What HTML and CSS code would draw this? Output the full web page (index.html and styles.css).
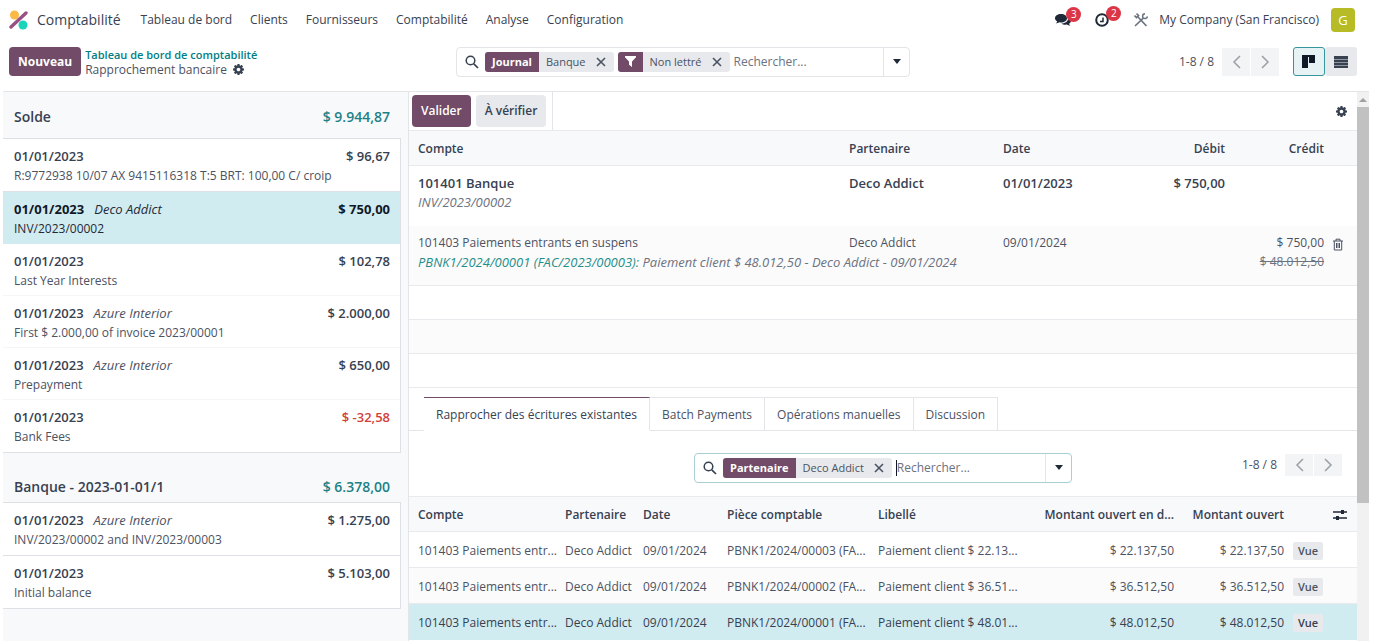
FILE: index.html
```
<!DOCTYPE html>
<html lang="fr">
<head>
    <meta charset="UTF-8">
    <meta name="viewport" content="width=device-width, initial-scale=1.0">
    <title>Rapprochement bancaire</title>
    <link rel="stylesheet" href="styles.css">
</head>
<body>
    <!-- Shared icons -->
    <svg class="sprite" aria-hidden="true">
        <symbol id="i-gear" viewBox="0 128 1536 1536"><path d="M1024 896q0-106-75-181t-181-75-181 75-75 181 75 181 181 75 181-75 75-181zm512-109v222q0 12-8 23t-20 13l-185 28q-19 54-39 91 35 50 107 138 10 12 10 25t-9 23q-27 37-99 108t-94 71q-12 0-26-9l-138-108q-44 23-91 38-16 136-29 186-7 28-36 28h-222q-14 0-24.500-8.500t-11.500-21.500l-28-184q-49-16-90-37l-141 107q-10 9-25 9-14 0-25-11-126-114-165-168-7-10-7-23 0-12 8-23 15-21 51-66.500t54-70.500q-27-50-41-99l-183-27q-13-2-21-12.500t-8-23.500v-222q0-12 8-23t19-13l186-28q14-46 39-92-40-57-107-138-10-12-10-24 0-10 9-23 26-36 98.500-107.500t94.500-71.500q13 0 26 10l138 107q44-23 91-38 16-136 29-186 7-28 36-28h222q14 0 24.500 8.500t11.500 21.500l28 184q49 16 90 37l142-107q9-9 24-9 13 0 25 10 129 119 165 170 7 8 7 22 0 12-8 23-15 21-51 66.500t-54 70.500q26 50 41 98l183 28q13 2 21 12.500t8 23.500z"/></symbol>
        <symbol id="i-search" viewBox="0 0 14 14"><circle cx="5.500" cy="5.500" r="4.300" fill="none" stroke="currentColor" stroke-width="1.500"/><path d="M8.800 8.800L13 13" stroke="currentColor" stroke-width="1.700"/></symbol>
        <symbol id="i-close" viewBox="0 0 10 10"><path d="M1 1l8 8M9 1L1 9" stroke="currentColor" stroke-width="1.600"/></symbol>
        <symbol id="i-caret" viewBox="0 0 8 5"><path d="M0 0h8L4 5z"/></symbol>
        <symbol id="i-prev" viewBox="0 0 9 14"><path d="M8 1L2 7l6 6" fill="none" stroke="currentColor" stroke-width="1.500"/></symbol>
        <symbol id="i-next" viewBox="0 0 9 14"><path d="M1 1l6 6-6 6" fill="none" stroke="currentColor" stroke-width="1.500"/></symbol>
    </svg>

    <header class="navbar">
        <svg class="logo" viewBox="0 0 20 20" aria-hidden="true">
            <circle cx="5.500" cy="5" r="4.500" fill="#fbb945"/>
            <circle cx="14" cy="15" r="4.500" fill="#1ad3bb"/>
            <path d="M2 17L17 3" stroke="#985184" stroke-width="3.400" stroke-linecap="round"/>
        </svg>
        <a class="app-name" href="#">Comptabilité</a>
        <nav class="menu">
            <a href="#">Tableau de bord</a>
            <a href="#">Clients</a>
            <a href="#">Fournisseurs</a>
            <a href="#">Comptabilité</a>
            <a href="#">Analyse</a>
            <a href="#">Configuration</a>
        </nav>
        <div class="systray">
            <button class="tray-button" aria-label="Messages">
                <svg width="16" height="14" viewBox="0 0 16 14"><path d="M6 1c3.400 0 6 1.800 6 4.300S9.400 9.500 6 9.500c-.6 0-1.200 0-1.700-.2C3.300 10 2 10.500.8 10.500c.7-.6 1.200-1.300 1.400-2C.8 7.700 0 6.600 0 5.300 0 2.800 2.600 1 6 1z"/><path d="M13.300 4.500c1.600.7 2.700 1.800 2.700 3.300 0 1.200-.8 2.300-2 3 .2.700.7 1.400 1.400 2-1.300 0-2.500-.5-3.500-1.200-2 .4-4.200 0-5.700-1.100 4 .1 7.300-2.200 7.100-6z"/></svg>
                <span class="badge">3</span>
            </button>
            <button class="tray-button" aria-label="Activités">
                <svg width="15" height="15" viewBox="0 0 15 15"><circle cx="7" cy="8" r="5.800" fill="none" stroke="currentColor" stroke-width="2"/><path d="M5 9.500h3V5.500" fill="none" stroke="currentColor" stroke-width="1.500"/></svg>
                <span class="badge">2</span>
            </button>
            <button class="tray-button tools" aria-label="Outils">
                <svg width="14" height="14" viewBox="0 0 14 14"><path d="M3.500 3.500L12.500 13" stroke="currentColor" stroke-width="1.700"/><path d="M.5 2.500L2.500 4.500 4.500 2.500 2.500.6M1 13L9 5.300" fill="none" stroke="currentColor" stroke-width="1.600"/><path d="M11 .8a2.400 2.400 0 1 0 2.400 2.600" fill="none" stroke="currentColor" stroke-width="1.500"/></svg>
            </button>
            <span class="company">My Company (San Francisco)</span>
            <span class="avatar">G</span>
        </div>
    </header>

    <div class="control-panel">
        <div class="control-left">
            <button class="btn btn-primary btn-new">Nouveau</button>
            <div class="breadcrumb">
                <a href="#">Tableau de bord de comptabilité</a>
                <div class="breadcrumb-current">
                    <span>Rapprochement bancaire</span>
                    <svg class="gear"><use href="#i-gear"/></svg>
                </div>
            </div>
        </div>
        <div class="search search-main">
            <svg class="search-icon"><use href="#i-search"/></svg>
            <div class="facet">
                <span class="facet-label">Journal</span>
                <span class="facet-value">Banque</span>
                <button class="facet-remove" aria-label="Retirer Banque"><svg><use href="#i-close"/></svg></button>
            </div>
            <div class="facet">
                <span class="facet-label facet-filter"><svg width="11" height="11" viewBox="0 0 11 11"><path d="M0 0h11v1.200L7 5.500V11L4 8.800V5.500L0 1.200z"/></svg></span>
                <span class="facet-value">Non lettré</span>
                <button class="facet-remove" aria-label="Retirer Non lettré"><svg><use href="#i-close"/></svg></button>
            </div>
            <input type="text" placeholder="Rechercher..." aria-label="Rechercher">
            <button class="search-toggle" aria-label="Options de recherche"><svg><use href="#i-caret"/></svg></button>
        </div>
        <div class="control-right">
            <div class="pager">
                <span>1-8 / 8</span>
                <div class="pager-buttons">
                    <button aria-label="Précédent"><svg><use href="#i-prev"/></svg></button>
                    <button aria-label="Suivant"><svg><use href="#i-next"/></svg></button>
                </div>
            </div>
            <div class="view-switch">
                <button class="active" aria-label="Kanban"><svg width="14" height="13" viewBox="0 0 14 13"><path d="M0 0h6v13H0zM7 1h6v7H7zM0 0h13v2H0z"/></svg></button>
                <button aria-label="Liste"><svg width="14" height="12" viewBox="0 0 14 12"><path d="M0 0h14v12H0z" opacity=".5"/><path d="M0 0h14v3H0zM0 4h14v2H0zM0 7h14v2H0zM0 10h14v2H0z"/></svg></button>
            </div>
        </div>
    </div>

    <main class="content">
        <aside class="statements">
            <div class="group-header group-first"><span>Solde</span><span class="total">$ 9.944,87</span></div>
            <div class="lines">
                <div class="line ruled">
                    <div class="line-top"><b>01/01/2023</b><b class="amount">$ 96,67</b></div>
                    <div>R:9772938 10/07 AX 9415116318 T:5 BRT: 100,00 C/ croip</div>
                </div>
                <div class="line selected">
                    <div class="line-top"><b>01/01/2023</b><i>Deco Addict</i><b class="amount">$ 750,00</b></div>
                    <div>INV/2023/00002</div>
                </div>
                <div class="line">
                    <div class="line-top"><b>01/01/2023</b><b class="amount">$ 102,78</b></div>
                    <div>Last Year Interests</div>
                </div>
                <div class="line">
                    <div class="line-top"><b>01/01/2023</b><i>Azure Interior</i><b class="amount">$ 2.000,00</b></div>
                    <div>First $ 2.000,00 of invoice 2023/00001</div>
                </div>
                <div class="line">
                    <div class="line-top"><b>01/01/2023</b><i>Azure Interior</i><b class="amount">$ 650,00</b></div>
                    <div>Prepayment</div>
                </div>
                <div class="line ruled">
                    <div class="line-top"><b>01/01/2023</b><b class="amount negative">$ -32,58</b></div>
                    <div>Bank Fees</div>
                </div>
            </div>
            <div class="group-header"><span>Banque - 2023-01-01/1</span><span class="total">$ 6.378,00</span></div>
            <div class="lines">
                <div class="line ruled">
                    <div class="line-top"><b>01/01/2023</b><i>Azure Interior</i><b class="amount">$ 1.275,00</b></div>
                    <div>INV/2023/00002 and INV/2023/00003</div>
                </div>
                <div class="line ruled">
                    <div class="line-top"><b>01/01/2023</b><b class="amount">$ 5.103,00</b></div>
                    <div>Initial balance</div>
                </div>
            </div>
        </aside>

        <section class="reconcile">
            <div class="toolbar">
                <div class="toolbar-buttons">
                    <button class="btn btn-primary">Valider</button>
                    <button class="btn btn-secondary">À vérifier</button>
                </div>
                <svg class="gear"><use href="#i-gear"/></svg>
            </div>

            <table class="entries">
                <colgroup><col><col class="w-partner"><col class="w-date"><col class="w-debit"><col class="w-credit"><col class="w-trash"></colgroup>
                <thead>
                    <tr><th>Compte</th><th>Partenaire</th><th>Date</th><th class="num">Débit</th><th class="num">Crédit</th><th></th></tr>
                </thead>
                <tbody>
                    <tr class="entry entry-main">
                        <td>101401 Banque<div class="note">INV/2023/00002</div></td>
                        <td>Deco Addict</td>
                        <td>01/01/2023</td>
                        <td class="num">$ 750,00</td>
                        <td></td>
                        <td></td>
                    </tr>
                    <tr class="entry">
                        <td>101403 Paiements entrants en suspens<div class="note"><a href="#">PBNK1/2024/00001 (FAC/2023/00003):</a> Paiement client $ 48.012,50 - Deco Addict - 09/01/2024</div></td>
                        <td>Deco Addict</td>
                        <td>09/01/2024</td>
                        <td></td>
                        <td class="num">$ 750,00<div class="old-amount">$ 48.012,50</div></td>
                        <td class="trash"><button aria-label="Supprimer"><svg width="12" height="13" viewBox="0 0 12 13"><path d="M1 3h10M4 3V1.200h4V3M2.300 3v9h7.400V3M4.500 5v5M6 5v5M7.500 5v5" fill="none" stroke="currentColor"/></svg></button></td>
                    </tr>
                    <tr class="empty"><td colspan="6"></td></tr>
                    <tr class="empty"><td colspan="6"></td></tr>
                    <tr class="empty"><td colspan="6"></td></tr>
                </tbody>
            </table>

            <nav class="tabs">
                <a class="active" href="#">Rapprocher des écritures existantes</a>
                <a href="#">Batch Payments</a>
                <a href="#">Opérations manuelles</a>
                <a href="#">Discussion</a>
            </nav>

            <div class="match-panel">
                <div class="search focused">
                    <svg class="search-icon"><use href="#i-search"/></svg>
                    <div class="facet">
                        <span class="facet-label">Partenaire</span>
                        <span class="facet-value">Deco Addict</span>
                        <button class="facet-remove" aria-label="Retirer Deco Addict"><svg><use href="#i-close"/></svg></button>
                    </div>
                    <input type="text" placeholder="Rechercher..." aria-label="Rechercher des écritures">
                    <button class="search-toggle" aria-label="Options de recherche"><svg><use href="#i-caret"/></svg></button>
                </div>
                <div class="pager">
                    <span>1-8 / 8</span>
                    <div class="pager-buttons">
                        <button aria-label="Précédent"><svg><use href="#i-prev"/></svg></button>
                        <button aria-label="Suivant"><svg><use href="#i-next"/></svg></button>
                    </div>
                </div>
            </div>

            <table class="matches">
                <colgroup><col><col class="w-name"><col class="w-day"><col class="w-move"><col class="w-label"><col class="w-currency"><col class="w-open"><col class="w-view"><col class="w-options"></colgroup>
                <thead>
                    <tr>
                        <th>Compte</th><th>Partenaire</th><th>Date</th><th>Pièce comptable</th><th>Libellé</th>
                        <th class="num">Montant ouvert en d...</th><th class="num">Montant ouvert</th><th></th>
                        <th><svg class="sliders" width="14" height="12" viewBox="0 0 14 12"><path d="M0 3h14M0 9h14" stroke="currentColor" stroke-width="1.400"/><path d="M8 1h3v4H8zM3 7h3v4H3z"/></svg></th>
                    </tr>
                </thead>
                <tbody>
                    <tr><td>101403 Paiements entr...</td><td>Deco Addict</td><td>09/01/2024</td><td>PBNK1/2024/00003 (FA...</td><td>Paiement client $ 22.13...</td><td class="num">$ 22.137,50</td><td class="num">$ 22.137,50</td><td class="view"><button>Vue</button></td><td></td></tr>
                    <tr><td>101403 Paiements entr...</td><td>Deco Addict</td><td>09/01/2024</td><td>PBNK1/2024/00002 (FA...</td><td>Paiement client $ 36.51...</td><td class="num">$ 36.512,50</td><td class="num">$ 36.512,50</td><td class="view"><button>Vue</button></td><td></td></tr>
                    <tr class="selected"><td>101403 Paiements entr...</td><td>Deco Addict</td><td>09/01/2024</td><td>PBNK1/2024/00001 (FA...</td><td>Paiement client $ 48.01...</td><td class="num">$ 48.012,50</td><td class="num">$ 48.012,50</td><td class="view"><button>Vue</button></td><td></td></tr>
                </tbody>
            </table>
        </section>

        <div class="scrollbar" aria-hidden="true">
            <svg width="8" height="4" viewBox="0 0 8 4"><path d="M4 0l4 4H0z"/></svg>
            <div class="thumb"></div>
        </div>
    </main>
</body>
</html>
```

FILE: styles.css
```
* {
    box-sizing: border-box;
}
body {
    margin: 0;
    padding: 0 4px 3px 3px;
    min-height: 100vh;
    display: flex;
    flex-direction: column;
    background: #fff;
    color: #4b5262;
    font-family: "Open Sans", "Noto Sans", sans-serif;
    font-size: 12px;
    line-height: 18px;
}
a {
    color: inherit;
    text-decoration: none;
}
button {
    font: inherit;
    color: inherit;
    border: none;
    background: none;
    padding: 0;
    cursor: pointer;
}
svg {
    display: block;
    fill: currentColor;
}
.sprite {
    position: absolute;
    width: 0;
    height: 0;
}
.gear {
    width: 11px;
    height: 11px;
    color: #374151;
}

/* Navbar */
.navbar {
    display: flex;
    align-items: center;
    height: 39px;
    padding: 0 14px 0 6px;
    color: #374151;
}
.logo {
    width: 20px;
    height: 20px;
    margin-right: 8px;
}
.app-name {
    font-size: 14px;
    margin-right: 20px;
}
.menu {
    display: flex;
    gap: 18px;
}
.systray {
    display: flex;
    align-items: center;
    margin-left: auto;
}
.tray-button {
    position: relative;
    margin-right: 24px;
    color: #1f2937;
}
.tray-button.tools {
    margin-right: 11px;
    color: #6b7280;
}
.badge {
    position: absolute;
    left: 11px;
    top: -6px;
    width: 15px;
    height: 15px;
    border-radius: 8px;
    background: #dc3545;
    color: #fff;
    font-size: 10px;
    line-height: 15px;
}
.avatar {
    width: 24px;
    height: 24px;
    margin-left: 12px;
    border-radius: 4px;
    background: #b7bb26;
    color: #fff;
    font-size: 13px;
    line-height: 24px;
    text-align: center;
}

/* Control panel */
.control-panel {
    display: flex;
    align-items: center;
    height: 53px;
    padding: 0 12px 7px 6px;
    border-bottom: 1px solid #e3e5e9;
}
.control-left,
.control-right {
    flex: 1;
    display: flex;
    align-items: center;
}
.control-right {
    justify-content: flex-end;
    gap: 14px;
}
.btn {
    height: 32px;
    padding: 0 9px;
    border-radius: 4px;
    font-weight: 600;
}
.btn-primary {
    background: #714b67;
    color: #fff;
}
.btn-secondary {
    background: #e7e9ed;
    color: #374151;
}
.btn-new {
    height: 29px;
    font-weight: 700;
}
.breadcrumb {
    margin-left: 4px;
    line-height: 15px;
}
.breadcrumb a {
    color: #017e84;
    font-size: 11px;
    font-weight: 600;
}
.breadcrumb-current {
    display: flex;
    align-items: center;
    gap: 6px;
}
.search {
    display: flex;
    align-items: center;
    width: 454px;
    height: 30px;
    padding-left: 8px;
    border: 1px solid #e3e5e9;
    border-radius: 4px;
}
.search-icon {
    width: 14px;
    height: 14px;
    margin-right: 6px;
    color: #374151;
}
.facet {
    display: flex;
    align-items: center;
    height: 20px;
    margin-right: 4px;
    border-radius: 3px;
    overflow: hidden;
    background: #e7e9ed;
    font-size: 11px;
    line-height: 20px;
}
.facet-label {
    padding: 0 7px;
    background: #714b67;
    color: #fff;
    font-weight: 700;
}
.facet-filter {
    display: flex;
    align-items: center;
    height: 20px;
}
.facet-value {
    padding: 0 10px 0 7px;
}
.facet-remove {
    padding-right: 8px;
}
.facet-remove svg {
    width: 10px;
    height: 10px;
    color: #4b5262;
}
.search input {
    flex: 1;
    min-width: 0;
    padding: 0;
    border: none;
    outline: none;
    background: none;
    font: inherit;
    color: inherit;
}
.search input::placeholder {
    color: #6b7280;
}
.search-toggle {
    display: flex;
    align-items: center;
    justify-content: center;
    width: 26px;
    height: 28px;
    border-left: 1px solid #e3e5e9;
    color: #1f2937;
}
.search-toggle svg {
    width: 8px;
    height: 5px;
}
.pager {
    display: flex;
    align-items: center;
    gap: 8px;
}
.pager-buttons {
    display: flex;
    gap: 1px;
}
.pager-buttons button {
    display: flex;
    align-items: center;
    justify-content: center;
    width: 28px;
    height: 28px;
    background: #f3f4f6;
    color: #9a9fa8;
}
.pager-buttons svg {
    width: 9px;
    height: 14px;
}
.view-switch {
    display: flex;
}
.view-switch button {
    display: flex;
    align-items: center;
    justify-content: center;
    width: 32px;
    height: 29px;
    border-radius: 3px;
    background: #e7e9ed;
    color: #374151;
}
.view-switch .active {
    border: 1px solid #35979c;
    background: #e6f2f3;
    color: #111827;
}

/* Content */
.content {
    flex: 1;
    display: flex;
}
.statements {
    flex: 0 0 406px;
    padding-right: 7px;
    border-right: 1px solid #e3e5e9;
    background: #f8f9fb;
}
.group-header {
    display: flex;
    align-items: flex-end;
    justify-content: space-between;
    height: 49px;
    padding: 0 11px 6px;
    font-size: 14px;
    font-weight: 600;
    color: #374151;
}
.group-first {
    height: 46px;
    padding-bottom: 12px;
}
.total {
    color: #1c8186;
}
.lines {
    border: 1px solid #dde0e4;
    border-width: 1px 1px 0 0;
    background: #fff;
}
.line {
    height: 52px;
    padding: 8px 10px 0 11px;
    line-height: 19px;
    border-bottom: 1px solid #f5f6f7;
}
.line.ruled {
    height: 53px;
    border-bottom-color: #dde0e4;
}
.line.selected {
    background: #d1ecf1;
    border-bottom-color: #d1ecf1;
    color: #1f2937;
}
.line-top {
    display: flex;
    gap: 10px;
}
.line b {
    font-size: 13px;
    font-weight: 600;
    color: #374151;
}
.line.selected b {
    color: #111827;
    font-weight: 700;
}
.line .amount {
    margin-left: auto;
}
.line .negative {
    color: #d23f3a;
}
.reconcile {
    flex: 1;
    min-width: 0;
}
.toolbar {
    display: flex;
    align-items: center;
    justify-content: space-between;
    height: 38px;
    padding-right: 10px;
}
.toolbar-buttons {
    display: flex;
    align-items: center;
    gap: 5px;
    height: 38px;
    padding: 0 6px 0 3px;
    border-right: 1px solid #e3e5e9;
}

/* Tables */
table {
    width: 100%;
    table-layout: fixed;
    border-collapse: separate;
    border-spacing: 0;
}
th {
    height: 36px;
    padding: 2px 5px 0;
    border: 1px solid #e8eaed;
    border-width: 1px 0;
    background: #f8f9fb;
    color: #374151;
    font-weight: 600;
    text-align: left;
    white-space: nowrap;
}
td {
    padding: 2px 5px 0;
    white-space: nowrap;
}
th:first-child,
td:first-child {
    padding-left: 9px;
}
.num {
    text-align: right;
}
.w-partner { width: 154px; }
.w-date { width: 140px; }
.w-debit { width: 92px; }
.w-credit { width: 99px; }
.w-trash { width: 28px; }
.entry td {
    height: 60px;
    padding-top: 8px;
    vertical-align: top;
}
.entries tbody tr:nth-child(even) td {
    background: #fbfbfc;
}
.entries tbody tr:nth-child(n+2) td {
    border-bottom: 1px solid #e8eaed;
}
.entry-main td {
    font-size: 13px;
    font-weight: 600;
    color: #374151;
}
.note,
.old-amount {
    font-size: 12px;
    font-weight: 400;
    color: #6b7280;
    line-height: 20px;
}
.note,
.line i {
    font-size: 13px;
    font-style: italic;
}
.note a {
    color: #1f8f8b;
}
.old-amount {
    text-decoration: line-through;
}
.trash svg {
    margin-top: 4px;
}
.trash button {
    display: block;
    margin-left: -2px;
}
.empty td {
    height: 34px;
}

/* Tabs */
.tabs {
    display: flex;
    margin-top: 9px;
    padding-left: 15px;
    box-shadow: inset 0 -1px #e3e5e9;
}
.tabs a {
    height: 34px;
    padding: 0 12px;
    border: 1px solid #e3e5e9;
    border-left: none;
    line-height: 34px;
}
.tabs .active {
    border-top-color: #714b67;
    border-bottom-color: #fff;
    background: #fff;
    color: #374151;
}

/* Matching entries */
.match-panel {
    display: flex;
    align-items: center;
    justify-content: space-between;
    height: 65px;
    padding: 8px 15px 0 285px;
}
.focused {
    width: 378px;
    border-color: #a9cfd4;
}
.focused input {
    height: 16px;
    border-left: 1px solid #111827;
}
.match-panel .pager {
    padding-bottom: 6px;
}
.match-panel .pager-buttons button {
    height: 22px;
}
.w-name { width: 78px; }
.w-day { width: 84px; }
.w-move { width: 151px; }
.w-label { width: 148px; }
.w-currency { width: 158px; }
.w-open { width: 110px; }
.w-view { width: 39px; }
.w-options { width: 29px; }
.matches td {
    height: 36px;
    border-bottom: 1px solid #e8eaed;
}
.matches tbody tr:nth-child(even) td {
    background: #fbfbfc;
}
.matches .selected td {
    background: #d1ecf1;
    border-bottom-color: #d1ecf1;
    color: #374151;
}
.sliders {
    color: #1f2937;
}
.view button {
    display: block;
    height: 18px;
    margin-left: -1px;
    padding: 0 5px;
    border-radius: 2px;
    background: #e7e9ed;
    font-size: 11px;
    font-weight: 600;
    line-height: 18px;
}

/* Scrollbar */
.scrollbar {
    display: flex;
    flex-direction: column;
    align-items: center;
    width: 12px;
    padding-top: 6px;
    background: #f1f1f1;
    color: #a0a0a0;
}
.thumb {
    width: 12px;
    height: 73%;
    margin-top: 5px;
    background: #c1c1c1;
}
```
